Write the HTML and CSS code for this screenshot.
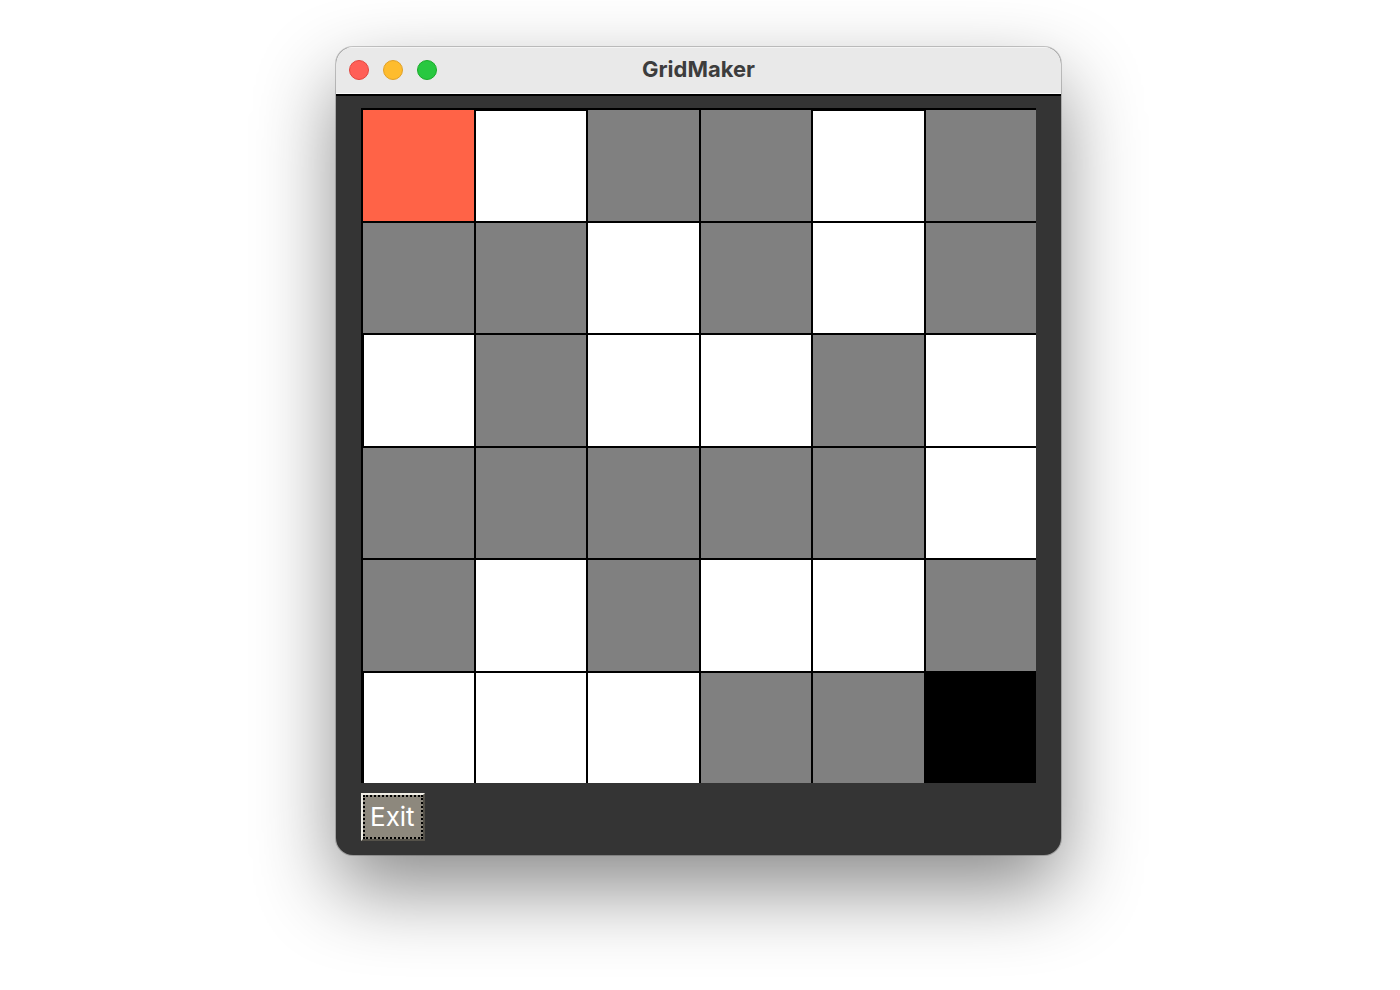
FILE: index.html
```html
<!DOCTYPE html>
<html lang="en">
<head>
<meta charset="utf-8">
<meta name="viewport" content="width=device-width, initial-scale=1">
<title>GridMaker</title>
<link rel="stylesheet" href="styles.css">
</head>
<body>
<main class="window">
  <header class="titlebar">
    <div class="lights">
      <button class="light close" type="button" aria-label="Close"></button>
      <button class="light minimize" type="button" aria-label="Minimize"></button>
      <button class="light zoom" type="button" aria-label="Zoom"></button>
    </div>
    <h1 class="title">GridMaker</h1>
  </header>
  <div class="content">
    <div class="board">
      <div class="cell start"></div><div class="cell open top"></div><div class="cell"></div><div class="cell"></div><div class="cell open top"></div><div class="cell"></div>
      <div class="cell"></div><div class="cell"></div><div class="cell open"></div><div class="cell"></div><div class="cell open"></div><div class="cell"></div>
      <div class="cell open left"></div><div class="cell"></div><div class="cell open"></div><div class="cell open"></div><div class="cell"></div><div class="cell open"></div>
      <div class="cell"></div><div class="cell"></div><div class="cell"></div><div class="cell"></div><div class="cell"></div><div class="cell open"></div>
      <div class="cell"></div><div class="cell open"></div><div class="cell"></div><div class="cell open"></div><div class="cell open"></div><div class="cell"></div>
      <div class="cell open left"></div><div class="cell open"></div><div class="cell open"></div><div class="cell"></div><div class="cell"></div><div class="cell goal"></div>
    </div>
    <button class="exit" type="button"><span class="exit-label">Exit</span></button>
  </div>
</main>
</body>
</html>
```
FILE: styles.css
```css
* {
  box-sizing: border-box;
}

body {
  min-height: 100vh;
  margin: 0;
  padding: 47px 19px 24px 16px;
  background: #fff;
  font-family: Inter, "Liberation Sans", sans-serif;
}

.window {
  max-width: 725px;
  margin: 0 auto;
  border-radius: 17px;
  background: #343434;
  box-shadow: 0 0 0 1px rgba(0, 0, 0, 0.2), 0 34px 80px rgba(0, 0, 0, 0.46);
  overflow: hidden;
}

.titlebar {
  display: grid;
  grid-template-columns: 1fr auto 1fr;
  align-items: center;
  height: 49px;
  padding: 0 13px 1px;
  background: #e9e9e9;
  border-bottom: 2px solid #000;
  box-shadow: inset 0 1px #f4f4f4, inset 0 -1px #fafafa;
}

.lights {
  display: flex;
  gap: 14px;
}

.light {
  width: 20px;
  height: 20px;
  padding: 0;
  border: 1px solid;
  border-radius: 50%;
}

.close {
  background: #ff5f57;
  border-color: #e2463f;
}

.minimize {
  background: #febc2e;
  border-color: #e0a028;
}

.zoom {
  background: #28c840;
  border-color: #1aab29;
}

.title {
  margin: 0;
  padding-bottom: 2px;
  color: #3d3d3d;
  font-size: 22px;
  font-weight: 700;
  line-height: 28px;
}

.content {
  padding: 12px 25px 14px;
}

.board {
  display: grid;
  grid-template-columns: repeat(6, 1fr);
  gap: 2px;
  padding: 2px 0 0 2px;
  background: #000;
}

.cell {
  aspect-ratio: 1;
  background: #808080;
}

.open {
  background: #fff;
}

.top {
  border-top: 1px solid #000;
}

.left {
  border-left: 1px solid #000;
}

.start {
  background: #ff6347;
}

.goal {
  background: #000;
}

.exit {
  display: block;
  margin-top: 10px;
  padding: 0;
  border: 2px solid;
  border-color: #f0eee6 #55524a #55524a #f0eee6;
  background: #8d887d;
  color: #fff;
  font: 400 26px/40px Inter, "Liberation Sans", sans-serif;
}

.exit-label {
  display: block;
  padding: 0 6px 0 5px;
  border: 2px dotted #000;
}
```
